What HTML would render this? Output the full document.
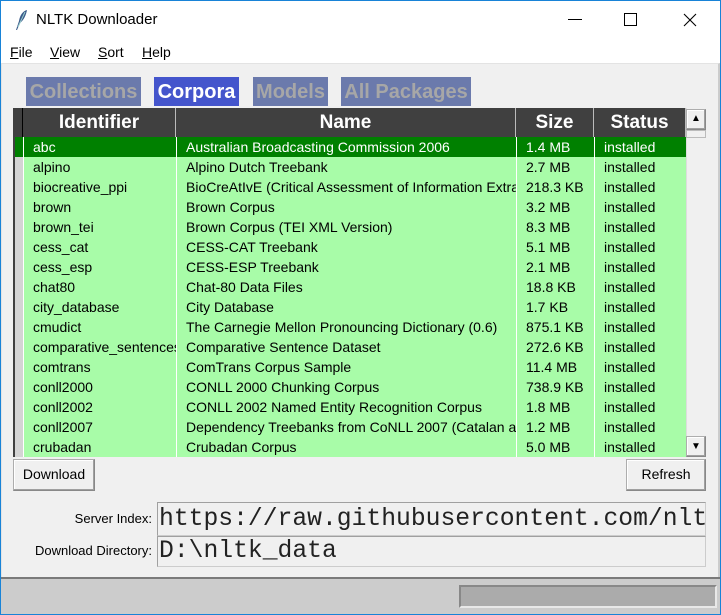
<!DOCTYPE html>
<html><head><style>
*{margin:0;padding:0;box-sizing:border-box}
body{width:721px;height:615px;position:relative;overflow:hidden;background:#fff;font-family:"Liberation Sans",sans-serif}
.a{position:absolute}
.win{left:0;top:0;width:721px;height:615px;border:1px solid #1883d7;border-top:1px solid #1883d7}
.tab{top:77px;height:29px;background:#6b7aac;color:#a7a7a7;font-weight:bold;font-size:20px;line-height:31px;text-align:center}
.hd{top:108px;height:29px;background:#404040;color:#fff;font-weight:bold;font-size:19px;line-height:29px;text-align:center;border-right:1px solid #bbb}
.row{left:15px;width:670px;height:20px;font-size:14px;line-height:20px}
.c{position:absolute;top:0;height:20px;padding-left:9px;white-space:nowrap;overflow:hidden;border-left:1px solid #fff}
.btn{background:#f0f0f0;border:1px solid #adadad;border-right-color:#888;border-bottom-color:#888;font-size:14px;text-align:center;line-height:29px;box-shadow:inset -1px -1px 0 #a0a0a0,inset 1px 1px 0 #fff}
.ent{background:#f0f0f0;border:1px solid #ccc;border-top-color:#a0a0a0;border-left-color:#a0a0a0;font-family:"Liberation Mono",monospace;font-size:24.7px;line-height:33px;padding-left:1px;white-space:nowrap;overflow:hidden;color:#222}
.lbl{font-size:13px;text-align:right;width:150px;left:2px}
</style></head><body>
<div class="a" style="left:0;top:0;width:721px;height:63px;background:#fff"></div>
<svg class="a" style="left:14px;top:9px" width="14" height="22" viewBox="0 0 14 22"><path d="M2 21 L5 12 C6 6 9 2 13 1 C12 6 10 11 6 14 L3 21Z" fill="#3a5a8a"/><path d="M4 18 L11 3" stroke="#9cc" stroke-width="1"/></svg>
<div class="a" style="left:36px;top:11px;font-size:15px;color:#000">NLTK Downloader</div>
<div class="a" style="left:568px;top:19px;width:14px;height:1px;background:#000"></div>
<div class="a" style="left:624px;top:13px;width:13px;height:13px;border:1px solid #000"></div>
<svg class="a" style="left:683px;top:13px" width="14" height="14"><path d="M1 1L13 13M13 1L1 13" stroke="#000" stroke-width="1.1"/></svg>
<div class="a" style="left:10px;top:44px;font-size:14px"><u>F</u>ile</div>
<div class="a" style="left:50px;top:44px;font-size:14px"><u>V</u>iew</div>
<div class="a" style="left:98px;top:44px;font-size:14px"><u>S</u>ort</div>
<div class="a" style="left:142px;top:44px;font-size:14px"><u>H</u>elp</div>
<div class="a" style="left:1px;top:63px;width:719px;height:514px;background:#f0f0f0;border-top:1px solid #e3e3e3;border-right:2px solid #ccc;border-left:1px solid #e3e3e3"></div>
<div class="a tab" style="left:26px;width:115px">Collections</div>
<div class="a tab" style="left:154px;width:85px;background:#4455cc;color:#fff">Corpora</div>
<div class="a tab" style="left:253px;width:75px">Models</div>
<div class="a tab" style="left:341px;width:130px">All Packages</div>
<div class="a" style="left:13px;top:108px;width:10px;height:349px;background:#d4d4d4;border-left:2px solid #404040"></div>
<div class="a" style="left:13px;top:108px;width:10px;height:29px;background:#404040;border-right:1px solid #000"></div>
<div class="a hd" style="left:23px;width:153px">Identifier</div>
<div class="a hd" style="left:176px;width:340px">Name</div>
<div class="a hd" style="left:516px;width:78px">Size</div>
<div class="a hd" style="left:594px;width:92px">Status</div>
<div class="a" style="left:23px;top:137px;width:663px;height:320px;background:#a8fca8"></div>
<div class="a" style="left:15px;top:137px;width:671px;height:20px;background:#008000"></div>
<div id="rows"></div>
<script>
var d=[["abc","Australian Broadcasting Commission 2006","1.4 MB"],["alpino","Alpino Dutch Treebank","2.7 MB"],["biocreative_ppi","BioCreAtIvE (Critical Assessment of Information Extraction)","218.3 KB"],["brown","Brown Corpus","3.2 MB"],["brown_tei","Brown Corpus (TEI XML Version)","8.3 MB"],["cess_cat","CESS-CAT Treebank","5.1 MB"],["cess_esp","CESS-ESP Treebank","2.1 MB"],["chat80","Chat-80 Data Files","18.8 KB"],["city_database","City Database","1.7 KB"],["cmudict","The Carnegie Mellon Pronouncing Dictionary (0.6)","875.1 KB"],["comparative_sentences","Comparative Sentence Dataset","272.6 KB"],["comtrans","ComTrans Corpus Sample","11.4 MB"],["conll2000","CONLL 2000 Chunking Corpus","738.9 KB"],["conll2002","CONLL 2002 Named Entity Recognition Corpus","1.8 MB"],["conll2007","Dependency Treebanks from CoNLL 2007 (Catalan and Basque)","1.2 MB"],["crubadan","Crubadan Corpus","5.0 MB"]];
var h="";d.forEach(function(r,i){var col=i==0?"#fff":"#000";h+='<div class="a row" style="top:'+(137+i*20)+'px;color:'+col+'">'+
'<div class="c" style="left:8px;width:153px;padding-left:9px">'+r[0]+'</div>'+
'<div class="c" style="left:161px;width:340px">'+r[1]+'</div>'+
'<div class="c" style="left:501px;width:78px">'+r[2]+'</div>'+
'<div class="c" style="left:579px;width:92px">installed</div></div>';});
document.getElementById("rows").innerHTML=h;
</script>
<div class="a" style="left:686px;top:108px;width:20px;height:349px;background:#f0f0f0;border-left:1px solid #ddd"></div>
<div class="a btn" style="left:686px;top:109px;width:20px;height:21px;line-height:18px;font-size:10px">▲</div>
<div class="a" style="left:686px;top:130px;width:20px;height:8px;border:1px solid #bbb;background:#f0f0f0"></div>
<div class="a btn" style="left:686px;top:436px;width:20px;height:21px;line-height:20px;font-size:10px">▼</div>
<div class="a btn" style="left:13px;top:459px;width:82px;height:32px">Download</div>
<div class="a btn" style="left:626px;top:459px;width:80px;height:32px">Refresh</div>
<div class="a lbl" style="top:511px">Server Index:</div>
<div class="a lbl" style="top:543px">Download Directory:</div>
<div class="a ent" style="left:157px;top:502px;width:549px;height:34px">https://raw.githubusercontent.com/nltk_data</div>
<div class="a ent" style="left:157px;top:536px;width:549px;height:31px;line-height:29px">D:\nltk_data</div>
<div class="a" style="left:1px;top:577px;width:719px;height:37px;background:#cccccc;border-top:2px solid #7a7a7a"></div>
<div class="a" style="left:459px;top:585px;width:258px;height:23px;background:#ababab;border:2px solid #e8e8e8;border-top-color:#888;border-left-color:#888"></div>
<div class="a win"></div>
</body></html>
